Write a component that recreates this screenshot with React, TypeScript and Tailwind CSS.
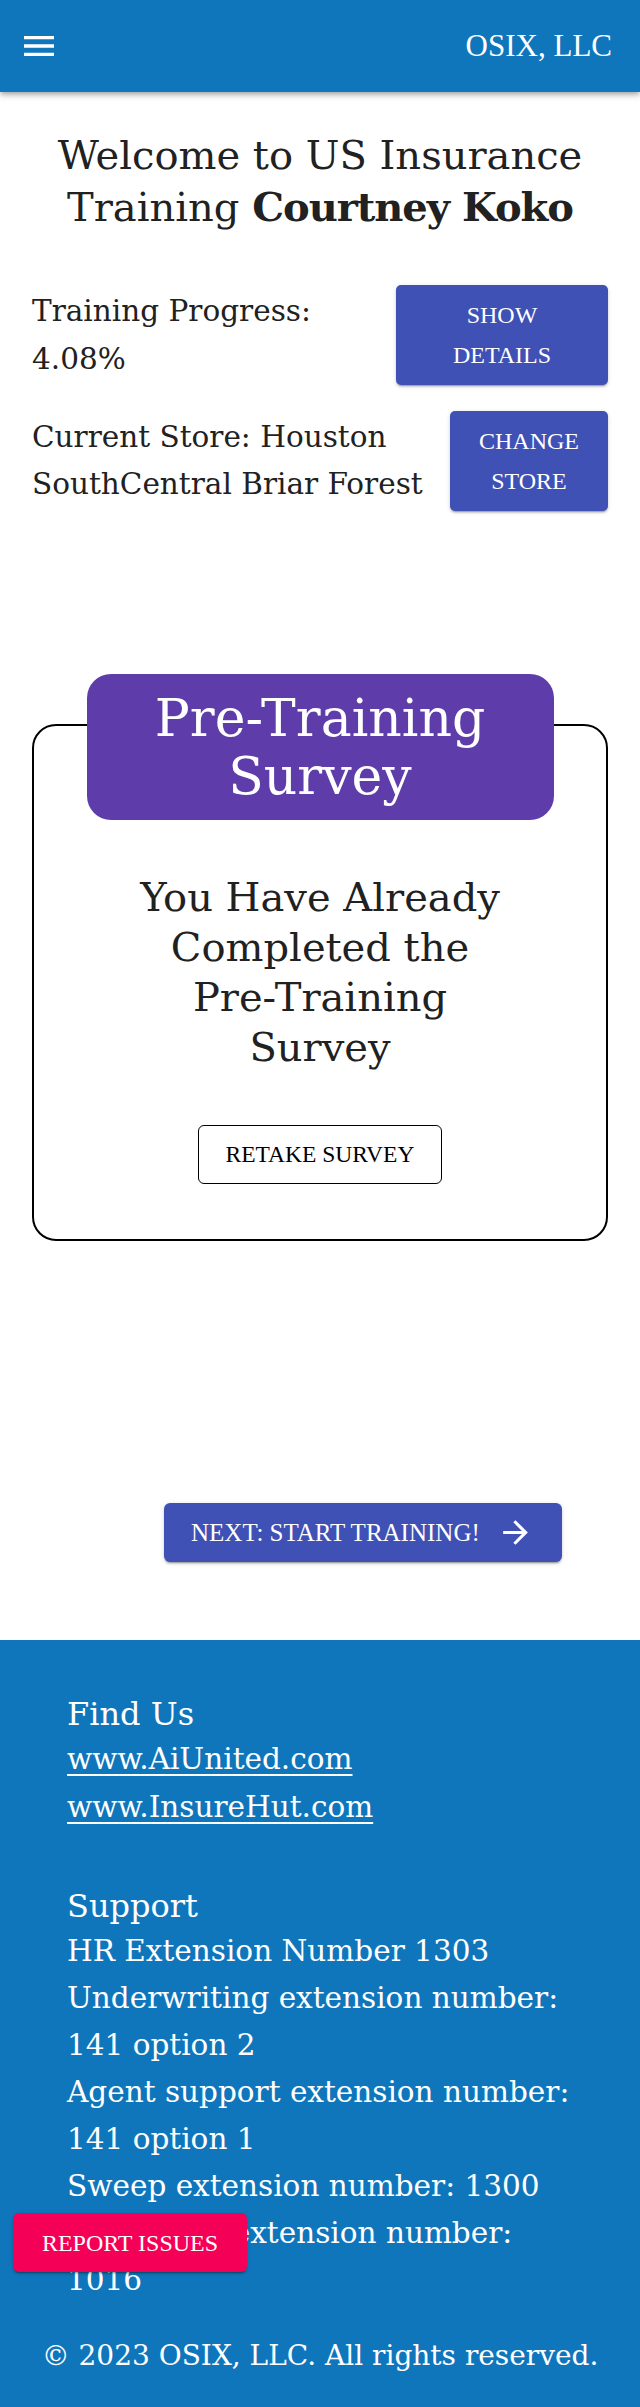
const raised =
  "shadow-[0_3px_1px_-2px_rgba(0,0,0,0.2),0_2px_2px_0_rgba(0,0,0,0.14),0_1px_5px_0_rgba(0,0,0,0.12)]";

const supportLines = [
  "HR Extension Number 1303",
  "Underwriting extension number: 141 option 2",
  "Agent support extension number: 141 option 1",
  "Sweep extension number: 1300",
  "Marketing extension number: 1016",
];

function MenuIcon() {
  return (
    <svg viewBox="0 0 24 24" className="h-10 w-10 fill-white">
      <path d="M3 18h18v-2H3v2zm0-5h18v-2H3v2zm0-7v2h18V6H3z" />
    </svg>
  );
}

function ArrowIcon() {
  return (
    <svg viewBox="0 0 24 24" className="h-[37px] w-[37px] fill-white">
      <path d="M12 4l-1.41 1.41L16.17 11H4v2h12.17l-5.58 5.59L12 20l8-8z" />
    </svg>
  );
}

export default function App() {
  return (
    <div className="relative min-h-screen bg-white font-['DejaVu_Serif',serif] text-[#212121]">
      <header className="relative z-10 flex h-[92px] items-center justify-between bg-[#1076bc] pl-[19px] pr-[28px] shadow-[0_2px_4px_-1px_rgba(0,0,0,0.2),0_4px_5px_0_rgba(0,0,0,0.14),0_1px_10px_0_rgba(0,0,0,0.12)]">
        <MenuIcon />
        <span className="font-['Liberation_Serif',serif] text-[31px] text-white">OSIX, LLC</span>
      </header>

      <main className="px-8 pb-[78px]">
        <h1 className="mt-[38px] text-center text-[40px] leading-[51px]">
          Welcome to US Insurance Training{" "}
          <span className="font-bold tracking-[-1px]">Courtney Koko</span>
        </h1>

        <div className="mt-[52px] flex items-center justify-between gap-4">
          <p className="text-[29.5px] leading-[48px]">Training Progress: 4.08%</p>
          <button
            className={`h-[100px] w-[212px] shrink-0 rounded-[5px] bg-[#3f51b5] font-['Liberation_Serif',serif] text-[24px] leading-[40px] text-white ${raised}`}
          >
            SHOW
            <br />
            DETAILS
          </button>
        </div>

        <div className="mt-[26px] flex items-center justify-between gap-4">
          <p className="text-[29.5px] leading-[47px]">Current Store: Houston SouthCentral Briar Forest</p>
          <button
            className={`h-[100px] w-[158px] shrink-0 rounded-[5px] bg-[#3f51b5] font-['Liberation_Serif',serif] text-[24px] leading-[40px] text-white ${raised}`}
          >
            CHANGE
            <br />
            STORE
          </button>
        </div>

        <section className="mt-[213px] rounded-[24px] border-2 border-black pb-[55px] text-center">
          <div className="mx-auto -mt-[52px] w-[467px] rounded-[24px] bg-[#5e3daa] py-[15px] text-[52px] leading-[58px] text-white">
            Pre-Training
            <br />
            Survey
          </div>
          <p className="mt-[52px] text-[40px] leading-[50px]">
            You Have Already
            <br />
            Completed the
            <br />
            Pre-Training
            <br />
            Survey
          </p>
          <button className="mt-[53px] h-[59px] w-[244px] rounded-[6px] border-[1.5px] border-black font-['Liberation_Serif',serif] text-[23.5px] text-black">
            RETAKE SURVEY
          </button>
        </section>

        <div className="mt-[262px] flex justify-end pr-[46px]">
          <button
            className={`flex h-[59px] w-[398px] items-center gap-[17px] rounded-[6px] bg-[#3f51b5] pl-[27px] font-['Liberation_Serif',serif] text-[25px] text-white ${raised}`}
          >
            NEXT: START TRAINING!
            <ArrowIcon />
          </button>
        </div>
      </main>

      <footer className="bg-[#1076bc] pb-[32px] pt-[53px] text-white">
        <div className="px-[67px]">
          <h2 className="text-[32px] leading-[42px]">Find Us</h2>
          <a className="block text-[29.5px] leading-[48px] underline underline-offset-[5px]">www.AiUnited.com</a>
          <a className="block text-[29.5px] leading-[48px] underline underline-offset-[5px]">www.InsureHut.com</a>

          <h2 className="mt-[53px] text-[32px] leading-[44px]">Support</h2>
          {supportLines.map((line) => (
            <p key={line} className="text-[29.5px] leading-[47px]">
              {line}
            </p>
          ))}
        </div>
        <p className="mt-[32px] text-center text-[28px] leading-[40px]">
          © 2023 OSIX, LLC. All rights reserved.
        </p>
      </footer>

      <button
        className={`absolute left-[13px] top-[2213px] h-[59px] w-[234px] rounded-[6px] bg-[#f50057] font-['Liberation_Serif',serif] text-[24px] text-white ${raised}`}
      >
        REPORT ISSUES
      </button>
    </div>
  );
}
